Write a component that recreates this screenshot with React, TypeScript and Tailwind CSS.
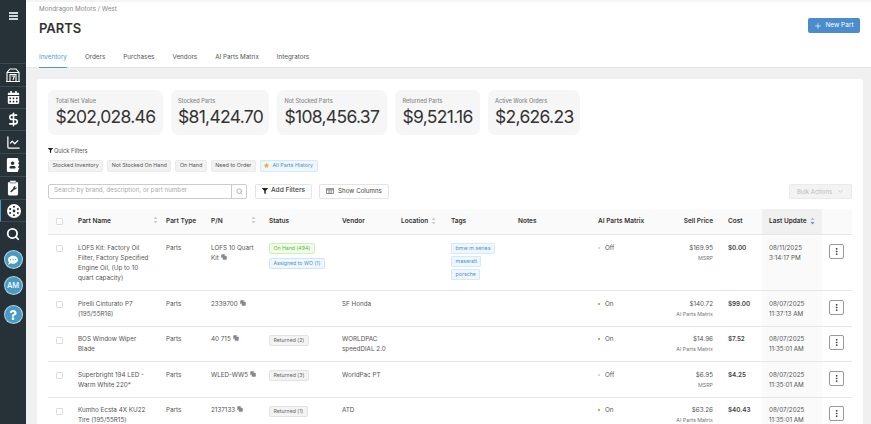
import { ChevronDown, Copy, Plus, Search, DollarSign, ChartLine, MoreVertical, Star } from 'lucide-react';
import { FaAddressBook, FaCalendarAlt, FaCommentDots, FaFilter, FaQuestion } from 'react-icons/fa';

const font = { fontFamily: 'Inter, "Noto Sans", sans-serif' };

const stats = [
  { label: 'Total Net Value', value: '$202,028.46', w: 'w-[114.5px]' },
  { label: 'Stocked Parts', value: '$81,424.70', w: 'w-[98.5px]' },
  { label: 'Not Stocked Parts', value: '$108,456.37', w: 'w-[110px]' },
  { label: 'Returned Parts', value: '$9,521.16', w: 'w-[84.5px]' },
  { label: 'Active Work Orders', value: '$2,626.23', w: 'w-[92px]' },
];

const returned = 'bg-[#f3f3f3] border-[#e3e3e3] text-[#666]';

const rows = [
  {
    name: 'LOFS Kit: Factory Oil Filter, Factory Specified Engine Oil, (Up to 10 quart capacity)',
    pn: 'LOFS 10 Quart Kit',
    status: [
      { text: 'On Hand (494)', cls: 'bg-[#f1fdea] border-[#c9f2b4] text-[#5cb83a]' },
      { text: 'Assigned to WO (1)', cls: 'bg-[#eff7fe] border-[#cfe6fa] text-[#4f8fcf]' },
    ],
    vendor: '',
    tags: ['bmw m series', 'maserati', 'porsche'],
    ai: false,
    price: '$169.95',
    source: 'MSRP',
    cost: '$0.00',
    date: '08/11/2025',
    time: '3:14:17 PM',
    h: 'h-[56px]',
  },
  { name: 'Pirelli Cinturato P7 (195/55R16)', pn: '2339700', status: [], vendor: 'SF Honda', tags: [], ai: true, price: '$140.72', source: 'AI Parts Matrix', cost: '$99.00', date: '08/07/2025', time: '11:37:13 AM', h: 'h-[35.5px]' },
  { name: 'BOS Window Wiper Blade', pn: '40 715', status: [{ text: 'Returned (2)', cls: returned }], vendor: 'WORLDPAC speedDIAL 2.0', tags: [], ai: true, price: '$14.96', source: 'AI Parts Matrix', cost: '$7.52', date: '08/07/2025', time: '11:35:01 AM', h: 'h-[35.5px]' },
  { name: 'Superbright 194 LED - Warm White 220*', pn: 'WLED-WW5', status: [{ text: 'Returned (3)', cls: returned }], vendor: 'WorldPac PT', tags: [], ai: false, price: '$6.95', source: 'MSRP', cost: '$4.25', date: '08/07/2025', time: '11:35:01 AM', h: 'h-[35.5px]' },
  { name: 'Kumho Ecsta 4X KU22 Tire (195/55R15)', pn: '2137133', status: [{ text: 'Returned (1)', cls: returned }], vendor: 'ATD', tags: [], ai: true, price: '$63.26', source: 'AI Parts Matrix', cost: '$40.43', date: '08/07/2025', time: '11:35:01 AM', h: 'h-[35.5px]' },
];

const SortArrows = ({ active }: { active?: boolean }) => (
  <svg width="5" height="8" viewBox="0 0 5 8" className="shrink-0">
    <path d="M2.5 0.5 L4.5 3 H0.5 Z" fill={active ? '#bbb' : '#ccc'} />
    <path d="M2.5 7.5 L4.5 5 H0.5 Z" fill={active ? '#4a9bd4' : '#ccc'} />
  </svg>
);

const Warehouse = () => (
  <svg width="16" height="16" viewBox="0 0 16 16" fill="none" stroke="#fff" strokeWidth="1.1">
    <path d="M1 14.5h14M2 14.5V5.5L5 2h6l3 3.5v9" />
    <path d="M2 5.5h12M5 14V7.5h6V14" />
    <path d="M6.6 9h2.8L8 13" />
  </svg>
);

const ClipboardWrench = () => (
  <svg width="12" height="16" viewBox="0 0 13 17">
    <rect x="1" y="2" width="11" height="14.5" rx="1.5" fill="#fff" />
    <rect x="3" y="0.5" width="7" height="2.5" rx="1" fill="#fff" stroke="#263238" strokeWidth="0.6" />
    <path d="M9.5 6.5a2 2 0 0 0-2.6 2.4L3.5 12.4l1 1 3.5-3.4a2 2 0 0 0 2.4-2.6L9.2 8.5 8.4 7.7z" fill="#263238" />
  </svg>
);

const Tire = () => (
  <svg width="14" height="14" viewBox="0 0 16 16">
    <circle cx="8" cy="8" r="8" fill="#fff" />
    <circle cx="8" cy="8" r="1.6" fill="#263238" />
    <circle cx="8" cy="3.2" r="1.2" fill="#263238" />
    <circle cx="8" cy="12.8" r="1.2" fill="#263238" />
    <circle cx="3.6" cy="5.8" r="1.2" fill="#263238" />
    <circle cx="12.4" cy="5.8" r="1.2" fill="#263238" />
    <circle cx="3.6" cy="10.2" r="1.2" fill="#263238" />
    <circle cx="12.4" cy="10.2" r="1.2" fill="#263238" />
  </svg>
);

const ColumnsIcon = () => (
  <svg width="8" height="6" viewBox="0 0 8 6" fill="none" stroke="#555" strokeWidth="0.7">
    <rect x="0.4" y="0.4" width="7.2" height="5.2" rx="0.5" />
    <path d="M0.4 1.8h7.2M3 1.8v3.8M5.2 1.8v3.8" />
  </svg>
);

const Sidebar = () => (
  <aside className="w-[26px] shrink-0 bg-[#263238] flex flex-col items-center">
    <div className="h-[64px] w-full flex justify-center pt-[12px] border-b border-[#3d4a50]">
      <div className="flex flex-col gap-[1.5px] w-[9px] h-[8px]">
        <span className="h-[2px] bg-[#cfd8dc]" />
        <span className="h-[2px] bg-[#cfd8dc]" />
        <span className="h-[2px] bg-[#cfd8dc]" />
      </div>
    </div>
    <div className="h-[23px] w-full flex items-center justify-center border-b border-[#3d4a50]"><Warehouse /></div>
    <div className="h-[22px] w-full flex items-center justify-center border-b border-[#3d4a50]"><FaCalendarAlt size={13} color="#fff" /></div>
    <div className="h-[22px] w-full flex items-center justify-center border-b border-[#3d4a50]"><DollarSign size={15} color="#fff" strokeWidth={2.5} /></div>
    <div className="h-[23px] w-full flex items-center justify-center border-b border-[#3d4a50]"><ChartLine size={15} color="#fff" strokeWidth={2} /></div>
    <div className="h-[23px] w-full flex items-center justify-center border-b border-[#3d4a50]"><FaAddressBook size={14} color="#fff" /></div>
    <div className="h-[23px] w-full flex items-center justify-center border-b border-[#3d4a50]"><ClipboardWrench /></div>
    <div className="h-[22px] w-full flex items-center justify-center border-b border-[#3d4a50] border-l border-l-[#4a9bd4]"><Tire /></div>
    <div className="h-[23px] w-full flex items-center justify-center"><Search size={14} color="#fff" strokeWidth={3} /></div>
    <div className="mt-[5px] size-[19px] rounded-full bg-[#4a9bc4] border border-white/60 flex items-center justify-center"><FaCommentDots size={10} color="#fff" /></div>
    <div className="mt-[7px] size-[19px] rounded-full bg-[#4a9bc4] border border-white/60 flex items-center justify-center text-[7.5px] font-medium text-white">AM</div>
    <div className="mt-[10px] size-[19px] rounded-full bg-[#4a9bc4] border border-white/60 flex items-center justify-center"><FaQuestion size={10} color="#fff" /></div>
  </aside>
);

const Th = ({ children, className = '' }: { children?: React.ReactNode; className?: string }) => (
  <th className={`p-0 text-left font-semibold text-[6.5px] text-[#333] align-middle ${className}`}>{children}</th>
);

const chip = 'h-[12px] px-[3.5px] flex items-center rounded-[2px] bg-[#f2f2f2] border border-[#eaeaea] whitespace-nowrap';

export default function App() {
  return (
    <div style={font} className="h-[424px] w-[871px] overflow-hidden flex bg-[#f0f0f0] text-[#555]">
      <Sidebar />
      <main className="w-[845px] flex flex-col">
        <header className="h-[68px] shrink-0 bg-white border-t-2 border-t-[#f4f4f4] border-b border-b-[#e8e8e8] pl-[13px] pr-[11px] flex flex-col">
          <div className="flex justify-between">
            <div>
              <p className="text-[6.3px] leading-[10px] mt-[2px] text-[#888]">Mondragon Motors / West</p>
              <h1 className="text-[13px] leading-[16px] mt-[6px] font-semibold text-[#333]">PARTS</h1>
            </div>
            <button className="mt-[16px] h-[15px] w-[52px] rounded-[2px] bg-[#4a8ccc] text-white text-[6.5px] flex items-center justify-center gap-[3px]">
              <Plus size={8} />New Part
            </button>
          </div>
          <nav className="flex gap-[18px] mt-[15px] text-[6.3px] text-[#555]">
            <span className="text-[#4a9bd4] h-[17px] pt-[2px] border-b border-[#4a9bd4]">Inventory</span>
            <span className="pt-[2px]">Orders</span>
            <span className="pt-[2px]">Purchases</span>
            <span className="pt-[2px]">Vendors</span>
            <span className="pt-[2px]">AI Parts Matrix</span>
            <span className="pt-[2px]">Integrators</span>
          </nav>
        </header>

        <section className="ml-[11px] mr-[8px] mt-[11px] flex-1 bg-white rounded-t-[2px] px-[11px] pt-[11px]">
          <div className="flex gap-[8px]">
            {stats.map(s => (
              <div key={s.label} className={`${s.w} h-[44.5px] rounded-[7px] bg-[#f6f6f6] px-[7.5px] pt-[8px]`}>
                <p className="text-[5.6px] leading-[7px] font-medium text-[#888] whitespace-nowrap">{s.label}</p>
                <p className="mt-[1px] text-[17.5px] leading-[22px] text-[#333] tracking-[-0.7px] whitespace-nowrap">{s.value}</p>
              </div>
            ))}
          </div>

          <div className="mt-[12px] flex items-center gap-[1px] text-[5.7px] leading-[8px] text-[#555]">
            <FaFilter size={5} color="#222" />
            Quick Filters
          </div>
          <div className="mt-[5px] flex gap-[4px] text-[5.4px]">
            <span className={chip}>Stocked Inventory</span>
            <span className={chip}>Not Stocked On Hand</span>
            <span className={chip}>On Hand</span>
            <span className={chip}>Need to Order</span>
            <span className="h-[12px] px-[3.5px] flex items-center gap-[3px] rounded-[2px] bg-[#eff7fe] border border-[#d5e9fa] text-[#4f8fcf] whitespace-nowrap">
              <Star size={5} fill="#f5a623" color="#f5a623" />All Parts History
            </span>
          </div>

          <div className="mt-[12px] flex items-center">
            <div className="w-[199px] h-[15px] flex rounded-[2px] border border-[#ccc] text-[6.25px]">
              <span className="flex-1 pl-[5px] flex items-center text-[#aaa]">Search by brand, description, or part number</span>
              <span className="w-[15px] border-l border-[#ccc] flex items-center justify-center"><Search size={7} color="#888" /></span>
            </div>
            <button className="ml-[8px] w-[57px] h-[15px] rounded-[2px] border border-[#e4e4e4] flex items-center justify-center gap-[3px] text-[6.6px] text-[#444] font-medium">
              <FaFilter size={6} color="#222" />Add Filters
            </button>
            <button className="ml-[7px] w-[70px] h-[15px] rounded-[2px] border border-[#e4e4e4] flex items-center justify-center gap-[4px] text-[6.2px] text-[#444]">
              <ColumnsIcon />Show Columns
            </button>
            <button className="ml-auto w-[63px] h-[15px] rounded-[2px] bg-[#f3f3f3] border border-[#eaeaea] flex items-center justify-center gap-[5px] text-[6px] text-[#bbb]">
              Bulk Actions<ChevronDown size={7} />
            </button>
          </div>

          <table className="mt-[10px] w-[804px] table-fixed border-collapse text-[6.3px] leading-[10.2px]">
            <colgroup>
              <col className="w-[30px]" />
              <col className="w-[88px]" />
              <col className="w-[45px]" />
              <col className="w-[58px]" />
              <col className="w-[73px]" />
              <col className="w-[59px]" />
              <col className="w-[50px]" />
              <col className="w-[67px]" />
              <col className="w-[80px]" />
              <col className="w-[65px]" />
              <col className="w-[65px]" />
              <col className="w-[34px]" />
              <col className="w-[60px]" />
              <col className="w-[30px]" />
            </colgroup>
            <thead>
              <tr className="h-[26px] bg-[#fafafa] border-b border-[#e6e6e6]">
                <Th><span className="block ml-[8px] size-[7px] border border-[#ddd] rounded-[1px] bg-white" /></Th>
                <Th><span className="flex justify-between pr-[8px]">Part Name<SortArrows /></span></Th>
                <Th>Part Type</Th>
                <Th><span className="flex justify-between pr-[13px]">P/N<SortArrows /></span></Th>
                <Th>Status</Th>
                <Th>Vendor</Th>
                <Th><span className="flex items-center gap-[3px]">Location<SortArrows /></span></Th>
                <Th>Tags</Th>
                <Th>Notes</Th>
                <Th>AI Parts Matrix</Th>
                <Th className="!text-right pr-[15px]">Sell Price</Th>
                <Th>Cost</Th>
                <Th className="bg-[#f0f0f0] pl-[7px]">
                  <span className="flex items-center gap-[3px]">Last Update<SortArrows active /></span>
                </Th>
                <Th />
              </tr>
            </thead>
            <tbody>
              {rows.map(r => (
                <tr key={r.pn} className={`${r.h} border-b border-[#e6e6e6] align-top`}>
                  <td className="pt-[10px]"><span className="block ml-[8px] size-[7px] border border-[#ddd] rounded-[1px]" /></td>
                  <td className="pt-[7.5px] pr-[15px]">{r.name}</td>
                  <td className="pt-[7.5px]">Parts</td>
                  <td className="pt-[7.5px] pr-[10px]">{r.pn} <Copy size={6} className="inline align-baseline" color="#888" fill="#888" /></td>
                  <td className="pt-[8px]">
                    <div className="flex flex-col items-start gap-[4px]">
                      {r.status.map(s => (
                        <span key={s.text} className={`h-[11px] px-[3.5px] flex items-center rounded-[2px] border text-[5.2px] whitespace-nowrap ${s.cls}`}>{s.text}</span>
                      ))}
                    </div>
                  </td>
                  <td className="pt-[7.5px] pr-[8px]">{r.vendor}</td>
                  <td />
                  <td className="pt-[8px]">
                    <div className="flex flex-col items-start gap-[2px]">
                      {r.tags.map(t => (
                        <span key={t} className="h-[11px] px-[3.5px] flex items-center rounded-[1px] bg-[#eff7fe] border border-[#d5e9fa] text-[5.3px] text-[#4f8fcf] whitespace-nowrap">{t}</span>
                      ))}
                    </div>
                  </td>
                  <td />
                  <td className="pt-[7.5px]">
                    <span className="flex items-center gap-[5px]">
                      <span className={`size-[2px] rounded-full ${r.ai ? 'bg-[#4fc13a]' : 'bg-[#ccc]'}`} />
                      {r.ai ? 'On' : 'Off'}
                    </span>
                  </td>
                  <td className="pt-[7.5px] pr-[15px] text-right">
                    <div>{r.price}</div>
                    <div className="text-[5.3px] text-[#777] whitespace-nowrap">{r.source}</div>
                  </td>
                  <td className="pt-[7.5px] font-semibold text-[#444]">{r.cost}</td>
                  <td className="bg-[#fafafa] pt-[7.5px] pl-[7px]">
                    {r.date}
                    <br />
                    {r.time}
                  </td>
                  <td className="pt-[8.5px] pl-[7px]">
                    <span className="size-[15px] rounded-[2px] border border-[#999] flex items-center justify-center"><MoreVertical size={9} color="#333" strokeWidth={2.5} /></span>
                  </td>
                </tr>
              ))}
            </tbody>
          </table>
        </section>
      </main>
    </div>
  );
}
